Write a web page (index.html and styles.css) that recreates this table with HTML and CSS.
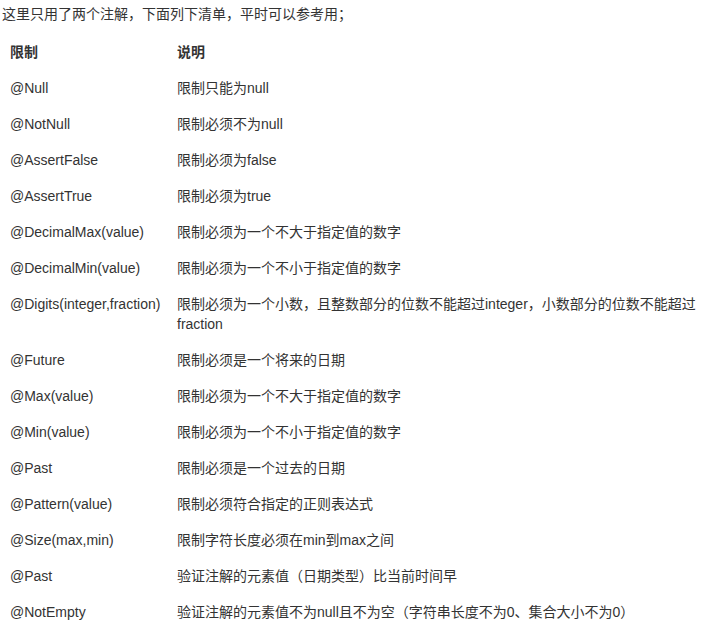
FILE: index.html
```html
<!DOCTYPE html>
<html lang="zh-CN">
<head>
    <meta charset="UTF-8">
    <meta name="viewport" content="width=device-width, initial-scale=1.0">
    <title>注解清单</title>
    <link rel="stylesheet" href="styles.css">
</head>
<body>

    <p class="intro">这里只用了两个注解，下面列下清单，平时可以参考用；</p>

    <table class="rules">
        <thead>
            <tr>
                <th class="col-name">限制</th>
                <th>说明</th>
            </tr>
        </thead>
        <tbody>
            <tr><td>@Null</td><td>限制只能为null</td></tr>
            <tr><td>@NotNull</td><td>限制必须不为null</td></tr>
            <tr><td>@AssertFalse</td><td>限制必须为false</td></tr>
            <tr><td>@AssertTrue</td><td>限制必须为true</td></tr>
            <tr><td>@DecimalMax(value)</td><td>限制必须为一个不大于指定值的数字</td></tr>
            <tr><td>@DecimalMin(value)</td><td>限制必须为一个不小于指定值的数字</td></tr>
            <tr><td>@Digits(integer,fraction)</td><td>限制必须为一个小数，且整数部分的位数不能超过integer，小数部分的位数不能超过fraction</td></tr>
            <tr><td>@Future</td><td>限制必须是一个将来的日期</td></tr>
            <tr><td>@Max(value)</td><td>限制必须为一个不大于指定值的数字</td></tr>
            <tr><td>@Min(value)</td><td>限制必须为一个不小于指定值的数字</td></tr>
            <tr><td>@Past</td><td>限制必须是一个过去的日期</td></tr>
            <tr><td>@Pattern(value)</td><td>限制必须符合指定的正则表达式</td></tr>
            <tr><td>@Size(max,min)</td><td>限制字符长度必须在min到max之间</td></tr>
            <tr><td>@Past</td><td>验证注解的元素值（日期类型）比当前时间早</td></tr>
            <tr><td>@NotEmpty</td><td>验证注解的元素值不为null且不为空（字符串长度不为0、集合大小不为0）</td></tr>
        </tbody>
    </table>

</body>
</html>
```

FILE: styles.css
```css
body {
    margin: 0;
    background-color: #ffffff;
    color: #333333;
    font-family: 'Liberation Sans', Arial, 'Noto Sans CJK SC', sans-serif;
    font-size: 14px;
    line-height: 20px;
}
.intro {
    margin: 4px 0 10px 2px;
}
.rules {
    width: 100%;
    table-layout: fixed;
    border-collapse: collapse;
}
.rules th, .rules td {
    padding: 8px 10px;
    text-align: left;
    vertical-align: top;
}
.rules th {
    font-weight: bold;
}
.rules .col-name {
    box-sizing: border-box;
    width: 167px;
}
```
